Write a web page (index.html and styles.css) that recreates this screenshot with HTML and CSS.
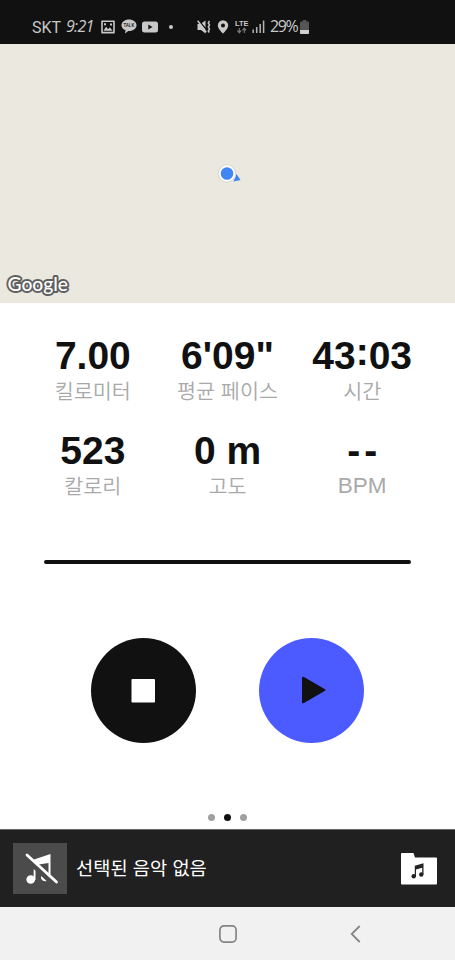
FILE: index.html
```html
<!DOCTYPE html>
<html lang="ko">
<head>
<meta charset="utf-8">
<title>러닝</title>
<link rel="stylesheet" href="styles.css">
</head>
<body>
<div class="screen">
  <header class="status">
    <span class="carrier">SKT</span>
    <span class="clock">9:21</span>
    <svg class="ic-image" width="14" height="14" viewBox="0 0 14 14"><path fill="#c8c8c8" fill-rule="evenodd" d="M1 .5h12q.8 0 .8.8v11.4q0 .8-.8.8H1q-.8 0-.8-.8V1.300q0-.8.8-.8zM1.800 2v9.800h10.400V2zM2.500 10.800l2.500-4 2 2.200 2-1.500 2.600 3.300zM3 3.300h2v2H3zM9 3.500h2v2H9z"/></svg>
    <svg class="ic-talk" width="16" height="15" viewBox="0 0 16 15"><path fill="#c8c8c8" d="M8 .5c4.300 0 7.500 2.500 7.500 5.700S12.300 12 8 12l-.7 0L4 14.500l.6-3.200C2.200 10.400.5 8.500.5 6.200.5 3 3.700.5 8 .5z"/><text x="2.600" y="8.200" class="talk-text" textLength="10.800" lengthAdjust="spacingAndGlyphs">TALK</text></svg>
    <svg class="ic-video" width="16" height="12" viewBox="0 0 16 12"><rect y=".5" width="16" height="11" rx="2.500" fill="#c8c8c8"/><path d="M6.300 3.500v5l4.200-2.500z" fill="#111"/></svg>
    <span class="more"></span>
    <svg class="ic-mute" width="15" height="14" viewBox="0 0 15 14"><path fill="#c8c8c8" d="M.5 4h3L8.500.5v13L4 10H.5z"/><path d="M1.500 0l9 11" stroke="#111" stroke-width="1.300"/><path d="M.7.800l8.500 11.500M12.500 1l-1.200 1.900 1.200 2-1.200 2 1.200 2-1.200 2 1 1.600" fill="none" stroke="#c8c8c8" stroke-width="1.500"/></svg>
    <svg class="ic-pin" width="12" height="14" viewBox="0 0 12 14"><path fill="#c8c8c8" fill-rule="evenodd" d="M6 .3a5.200 5.200 0 0 1 5.200 5.200C11.200 9 6 13.600 6 13.600S.8 9 .8 5.500A5.200 5.200 0 0 1 6 .3zm0 3.200a2 2 0 1 0 0 4 2 2 0 0 0 0-4z"/></svg>
    <svg class="ic-lte" width="14" height="15" viewBox="0 0 14 15"><text x="0" y="6.500" class="lte-text" textLength="13.500" lengthAdjust="spacingAndGlyphs">LTE</text><path d="M4.300 9v4.500M2.500 11.500l1.800 2.200 1.800-2.200M9.300 14V9.500M7.500 11.400l1.800-2.200 1.800 2.200" fill="none" stroke="#777" stroke-width="1.200"/></svg>
    <svg class="ic-signal" width="13" height="13" viewBox="0 0 13 13"><path d="M1.200 9.500V13M4.700 7v6M8.200 4v9M11.600.5V13" stroke="#b5b5b5" stroke-width="1.500"/></svg>
    <span class="percent">29%</span>
    <svg class="ic-battery" width="9" height="14" viewBox="0 0 9 14"><path fill="#555" d="M2.700 0h3.600v1.500H8q1 0 1 1V13q0 1-1 1H1q-1 0-1-1V2.500q0-1 1-1h1.700z"/><path fill="#d0d0d0" d="M0 10h9v3q0 1-1 1H1q-1 0-1-1z"/></svg>
  </header>

  <section class="map">
    <svg class="marker" width="26" height="24" viewBox="0 0 26 24"><path d="M20.500 12l4 6-7 1.500z" fill="#4083ea"/><circle cx="11" cy="11.500" r="9.200" fill="#d9d6d0"/><circle cx="11" cy="11.500" r="8.200" fill="#fff"/><circle cx="11" cy="11.500" r="6.300" fill="#4285f4"/></svg>
    <svg class="google" width="72" height="28" viewBox="0 0 72 28"><text x="7.500" y="15.500" class="google-text" textLength="60.500" lengthAdjust="spacingAndGlyphs">Google</text></svg>
  </section>

  <main class="panel">
    <div class="stats">
      <div class="stat"><b>7.00</b><span>킬로미터</span></div>
      <div class="stat"><b>6'09"</b><span>평균 페이스</span></div>
      <div class="stat"><b>43<i class="colon">:</i>03</b><span>시간</span></div>
      <div class="stat"><b>523</b><span>칼로리</span></div>
      <div class="stat"><b>0 m</b><span>고도</span></div>
      <div class="stat"><b class="empty">--</b><span class="latin">BPM</span></div>
    </div>
    <div class="progress"></div>
    <div class="controls">
      <button class="round stop" aria-label="정지"><svg width="105" height="105" viewBox="0 0 105 105"><rect x="40.500" y="41" width="23.500" height="23.500" rx=".8" fill="#fff"/></svg></button>
      <button class="round play" aria-label="재개"><svg width="105" height="105" viewBox="0 0 105 105"><path d="M44 39.700v24.600L65.500 52z" fill="#111" stroke="#111" stroke-width="2" stroke-linejoin="round"/></svg></button>
    </div>
    <div class="dots"><i></i><i class="on"></i><i></i></div>
  </main>

  <section class="music">
    <div class="cover"><svg width="54" height="51" viewBox="0 0 54 51"><g fill="#fff"><path d="M21 16.500L37.500 11v25.500h-2V20L22.500 22v15h-2z"/><circle cx="17.700" cy="36.500" r="4.300"/><ellipse cx="32.500" cy="34.500" rx="4.500" ry="3.800"/></g><path d="M11 13.500l32 30" stroke="#4b4b4b" stroke-width="5"/><path d="M14 12l29.500 27" stroke="#fff" stroke-width="2.800" stroke-linecap="round"/></svg></div>
    <span class="track">선택된 음악 없음</span>
    <svg class="folder" width="36" height="32" viewBox="0 0 36 32"><path fill="#fff" d="M1 0h11.500l1.500 4.500h21q1 0 1 1V30.500q0 1-1 1H1q-1 0-1-1V1q0-1 1-1z"/><path fill="#222" d="M13.800 12.700l8.700-2.400v11h-1.300v-6.500L15 16.500v7h-1.200z"/><circle cx="12.700" cy="23.300" r="2.200" fill="#222"/><circle cx="20.300" cy="21.500" r="2.200" fill="#222"/></svg>
  </section>

  <nav class="nav">
    <svg class="home" width="18" height="18" viewBox="0 0 18 18"><rect x=".9" y=".9" width="16.200" height="16.200" rx="4" fill="none" stroke="#858585" stroke-width="1.700"/></svg>
    <svg class="back" width="11" height="18" viewBox="0 0 11 18"><path d="M9.700 1L1.700 9l8 8" fill="none" stroke="#858585" stroke-width="1.800"/></svg>
  </nav>
</div>
</body>
</html>
```
FILE: styles.css
```css
* { box-sizing: border-box; }
body { margin: 0; background: #fff; font-family: "Liberation Sans", "Noto Sans CJK KR", sans-serif; }
svg { display: block; flex: none; }
.screen { width: 455px; height: 960px; display: flex; flex-direction: column; overflow: hidden; }

.status { height: 44px; flex: none; background: #111; color: #c8c8c8; display: flex; align-items: center; padding: 9px 0 0 32px; font-family: Roboto, sans-serif; white-space: nowrap; }
.carrier { width: 34px; font-size: 16px; padding-top: 1px; }
.clock { width: 35px; font: italic 16px/19px "Open Sans", sans-serif; letter-spacing: -.7px; }
.ic-talk { margin-left: 6px; }
.talk-text { font: bold 5px "Liberation Sans", sans-serif; fill: #222; }
.ic-video { margin-left: 5px; }
.more { width: 4px; height: 4px; border-radius: 2px; background: #c8c8c8; margin: 0 24px 0 11px; }
.ic-pin { margin-left: 5px; }
.ic-lte { margin-left: 6px; overflow: visible; }
.lte-text { font: bold 8px "Liberation Sans", sans-serif; fill: #c8c8c8; }
.ic-signal { margin-left: 3px; }
.percent { width: 28px; margin-left: 5px; padding-bottom: 1px; font: 16px/18px "Open Sans", sans-serif; letter-spacing: -1.4px; }
.ic-battery { margin-left: 2px; }

.map { height: 259px; flex: none; background: #ebe8e0; display: flex; flex-direction: column; justify-content: space-between; padding-top: 118px; }
.marker { margin-left: 216px; }
.google { overflow: visible; }
.google-text { font: 500 20px Lato, sans-serif; fill: #fff; stroke: #606060; stroke-width: 4px; stroke-linejoin: round; paint-order: stroke; }

.panel { height: 526px; flex: none; display: flex; flex-direction: column; align-items: center; padding-top: 30px; }
.stats { width: 404px; display: grid; grid-template-columns: repeat(3, 1fr); grid-auto-rows: 95px; }
.stat { display: flex; flex-direction: column; align-items: center; white-space: nowrap; }
.stat b { font-size: 39px; line-height: 45px; color: #111; }
.stat b.empty { letter-spacing: 4px; padding-left: 4px; }
.colon { font-style: normal; position: relative; top: -4px; }
.stat span { margin-top: -1px; font: 350 20.700px/26px "Noto Sans CJK KR", sans-serif; color: #a9a9a9; }
.stat span.latin { margin-top: 0; font: 22.500px/26px "Liberation Sans", sans-serif; }
.progress { width: 367px; height: 4px; border-radius: 2px; background: #111; margin-top: 37px; }
.controls { display: flex; gap: 63px; margin-top: 74px; }
.round { width: 105px; height: 105px; border: 0; padding: 0; border-radius: 50%; }
.stop { background: #111; }
.play { background: #4c5bff; }
.dots { display: flex; gap: 9px; margin-top: 71px; }
.dots i { width: 7px; height: 7px; border-radius: 50%; background: #a0a0a0; }
.dots .on { background: #111; }

.music { height: 78px; flex: none; background: #202020; border-top: 1px solid #666; display: flex; align-items: center; padding: 0 18px 0 13px; }
.cover { width: 54px; height: 51px; background: #4b4b4b; }
.track { color: #fff; font: 18.700px/28px "Noto Sans CJK KR", sans-serif; margin-left: 9px; padding-bottom: 4px; }
.folder { margin-left: auto; }
.nav { flex: 1; background: #f1f1f1; display: flex; align-items: center; padding: 1px 0 0 219px; }
.back { margin-left: 113px; }
```
